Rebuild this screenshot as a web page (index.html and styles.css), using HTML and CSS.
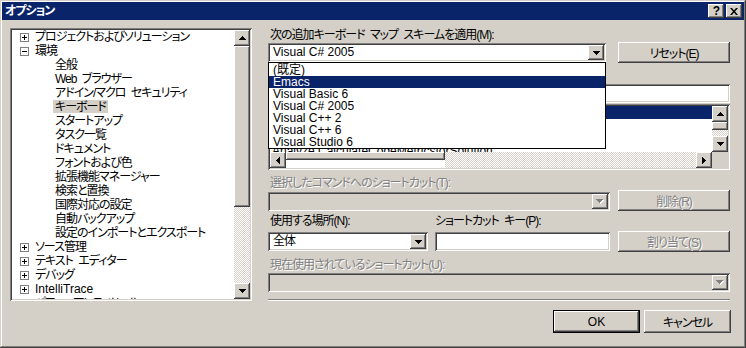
FILE: index.html
```html
<!DOCTYPE html>
<html lang="ja">
<head>
    <meta charset="UTF-8">
    <meta name="viewport" content="width=device-width, initial-scale=1.0">
    <title>オプション</title>
    <link rel="stylesheet" href="styles.css">
</head>
<body>
    <div class="window">
        <div class="titlebar">
            <span class="title">オプション</span>
            <div class="caption-buttons">
                <button class="raised cap-btn">?</button>
                <button class="raised cap-btn">
                    <svg width="8" height="7" viewBox="0 0 8 7"><path d="M0 0h2l2 2.4L6 0h2L5 3.5 8 7H6L4 4.6 2 7H0l3-3.5z"/></svg>
                </button>
            </div>
        </div>

        <div class="content">
            <!-- left: category tree -->
            <div class="tree sunken">
                <ul class="tree-items">
                    <li class="node"><svg class="toggle" width="9" height="9" viewBox="0 0 9 9"><rect x="0.5" y="0.5" width="8" height="8" fill="#fff" stroke="#808080"/><path d="M2 4.5h5M4.5 2v5" stroke="#000"/></svg>プロジェクトおよびソリューション</li>
                    <li class="node"><svg class="toggle" width="9" height="9" viewBox="0 0 9 9"><rect x="0.5" y="0.5" width="8" height="8" fill="#fff" stroke="#808080"/><path d="M2 4.5h5" stroke="#000"/></svg>環境</li>
                    <li class="child"><span>全般</span></li>
                    <li class="child"><span>Web ブラウザー</span></li>
                    <li class="child"><span>アドイン/マクロ セキュリティ</span></li>
                    <li class="child"><span class="current">キーボード</span></li>
                    <li class="child"><span>スタートアップ</span></li>
                    <li class="child"><span>タスク一覧</span></li>
                    <li class="child"><span>ドキュメント</span></li>
                    <li class="child"><span>フォントおよび色</span></li>
                    <li class="child"><span>拡張機能マネージャー</span></li>
                    <li class="child"><span>検索と置換</span></li>
                    <li class="child"><span>国際対応の設定</span></li>
                    <li class="child"><span>自動バックアップ</span></li>
                    <li class="child"><span>設定のインポートとエクスポート</span></li>
                    <li class="node"><svg class="toggle" width="9" height="9" viewBox="0 0 9 9"><rect x="0.5" y="0.5" width="8" height="8" fill="#fff" stroke="#808080"/><path d="M2 4.5h5M4.5 2v5" stroke="#000"/></svg>ソース管理</li>
                    <li class="node"><svg class="toggle" width="9" height="9" viewBox="0 0 9 9"><rect x="0.5" y="0.5" width="8" height="8" fill="#fff" stroke="#808080"/><path d="M2 4.5h5M4.5 2v5" stroke="#000"/></svg>テキスト エディター</li>
                    <li class="node"><svg class="toggle" width="9" height="9" viewBox="0 0 9 9"><rect x="0.5" y="0.5" width="8" height="8" fill="#fff" stroke="#808080"/><path d="M2 4.5h5M4.5 2v5" stroke="#000"/></svg>デバッグ</li>
                    <li class="node latin"><svg class="toggle" width="9" height="9" viewBox="0 0 9 9"><rect x="0.5" y="0.5" width="8" height="8" fill="#fff" stroke="#808080"/><path d="M2 4.5h5M4.5 2v5" stroke="#000"/></svg>IntelliTrace</li>
                    <li class="node"><svg class="toggle" width="9" height="9" viewBox="0 0 9 9"><rect x="0.5" y="0.5" width="8" height="8" fill="#fff" stroke="#808080"/><path d="M2 4.5h5M4.5 2v5" stroke="#000"/></svg>パフォーマンス ツール</li>
                </ul>
                <div class="vscroll">
                    <span class="raised sb-btn"><svg width="7" height="4" viewBox="0 0 7 4"><path d="M3 0h1v1h1v1h1v1h1v1H0V3h1V2h1V1h1z"/></svg></span>
                    <span class="raised sb-thumb"></span>
                    <span class="sb-track"></span>
                    <span class="raised sb-btn"><svg width="7" height="4" viewBox="0 0 7 4"><path d="M0 0h7v1H6v1H5v1H4v1H3V3H2V2H1V1H0z"/></svg></span>
                </div>
            </div>

            <!-- right: keyboard settings -->
            <div class="panel">
                <label class="lbl">次の追加キーボード マップ スキームを適用(M):</label>
                <div class="row row-scheme">
                    <div class="combo sunken scheme">
                        <span class="combo-text latin">Visual C# 2005</span>
                        <span class="raised combo-btn"><svg width="7" height="4" viewBox="0 0 7 4"><path d="M0 0h7v1H6v1H5v1H4v1H3V3H2V2H1V1H0z"/></svg></span>
                        <ul class="dropdown latin">
                            <li>(既定)</li>
                            <li class="selected">Emacs</li>
                            <li>Visual Basic 6</li>
                            <li>Visual C# 2005</li>
                            <li>Visual C++ 2</li>
                            <li>Visual C++ 6</li>
                            <li>Visual Studio 6</li>
                        </ul>
                    </div>
                    <button class="raised push">リセット(E)</button>
                </div>

                <label class="lbl lbl-search">次の文字列を含むコマンドを表示(C):</label>
                <div class="textbox sunken search"></div>

                <div class="cmd-list sunken">
                    <div class="cmd-body">
                        <ul class="cmd-rows latin">
                            <li class="selected">Action.Add.NewProject</li>
                            <li>Action.Add.NewTest</li>
                            <li>Action.Add.NewUnitTest</li>
                            <li>Analyze.CalculateCodeMetricsforSolution</li>
                        </ul>
                        <div class="vscroll">
                            <span class="raised sb-btn"><svg width="7" height="4" viewBox="0 0 7 4"><path d="M3 0h1v1h1v1h1v1h1v1H0V3h1V2h1V1h1z"/></svg></span>
                            <span class="raised sb-thumb"></span>
                            <span class="sb-track"></span>
                            <span class="raised sb-btn"><svg width="7" height="4" viewBox="0 0 7 4"><path d="M0 0h7v1H6v1H5v1H4v1H3V3H2V2H1V1H0z"/></svg></span>
                        </div>
                    </div>
                    <div class="hscroll">
                        <span class="raised sb-btn"><svg width="4" height="7" viewBox="0 0 4 7"><path d="M3 0h1v7H3V6H2V5H1V4H0V3h1V2h1V1h1z"/></svg></span>
                        <span class="raised sb-thumb"></span>
                        <span class="sb-track"></span>
                        <span class="raised sb-btn"><svg width="4" height="7" viewBox="0 0 4 7"><path d="M0 0h1v1h1v1h1v1h1v1H3v1H2v1H1v1H0z"/></svg></span>
                        <span class="corner"></span>
                    </div>
                </div>

                <label class="lbl disabled lbl-gap">選択したコマンドへのショートカット(T):</label>
                <div class="row row-del">
                    <div class="combo sunken off del-combo">
                        <span class="combo-text"></span>
                        <span class="raised combo-btn"><svg width="8" height="5" viewBox="0 0 8 5"><path fill="#fff" d="M1 1h7v1H7v1H6v1H5v1H4V4H3V3H2V2H1z"/><path fill="#808080" d="M0 0h7v1H6v1H5v1H4v1H3V3H2V2H1V1H0z"/></svg></span>
                    </div>
                    <button class="raised push disabled">削除(R)</button>
                </div>

                <div class="row-labels">
                    <label class="lbl lbl-where">使用する場所(N):</label>
                    <label class="lbl lbl-key">ショートカット キー(P):</label>
                </div>
                <div class="row row-assign">
                    <div class="combo sunken where-combo">
                        <span class="combo-text">全体</span>
                        <span class="raised combo-btn"><svg width="7" height="4" viewBox="0 0 7 4"><path d="M0 0h7v1H6v1H5v1H4v1H3V3H2V2H1V1H0z"/></svg></span>
                    </div>
                    <div class="textbox sunken key-box"></div>
                    <button class="raised push disabled">割り当て(S)</button>
                </div>

                <label class="lbl disabled lbl-gap">現在使用されているショートカット(U):</label>
                <div class="combo sunken off used-combo">
                    <span class="combo-text"></span>
                    <span class="raised combo-btn"><svg width="8" height="5" viewBox="0 0 8 5"><path fill="#fff" d="M1 1h7v1H7v1H6v1H5v1H4V4H3V3H2V2H1z"/><path fill="#808080" d="M0 0h7v1H6v1H5v1H4v1H3V3H2V2H1V1H0z"/></svg></span>
                </div>

                <div class="separator"></div>
            </div>
        </div>

        <div class="footer">
            <button class="raised push default latin">OK</button>
            <button class="raised push">キャンセル</button>
        </div>
    </div>
</body>
</html>
```

FILE: styles.css
```css
* {
    box-sizing: border-box;
}

body {
    margin: 0;
    background-color: #d4d0c8;
    font-family: "Liberation Sans", "Noto Sans CJK JP", sans-serif;
    font-size: 12px;
    font-feature-settings: "palt" 1;
    letter-spacing: -1px;
    word-spacing: 3px;
    color: #000;
}

/* latin-only text keeps normal spacing */
.latin {
    letter-spacing: 0;
    word-spacing: 0;
}

ul {
    list-style: none;
    margin: 0;
    padding: 0;
}

button {
    font: inherit;
    color: inherit;
    letter-spacing: inherit;
    word-spacing: inherit;
    border: none;
    margin: 0;
    padding: 0;
}

/* classic 3d borders */
.raised {
    background-color: #d4d0c8;
    box-shadow: inset -1px -1px #404040, inset 1px 1px #fff, inset -2px -2px #808080, inset 2px 2px #d4d0c8;
}

.sunken {
    padding: 2px;
    box-shadow: inset 1px 1px #808080, inset -1px -1px #fff, inset 2px 2px #404040, inset -2px -2px #d4d0c8;
}

.disabled {
    color: #808080;
    text-shadow: 1px 1px #fff;
}

.window {
    width: 746px;
    height: 348px;
    padding: 2px;
    display: flex;
    flex-direction: column;
    box-shadow: inset -1px -1px #404040, inset 1px 1px #d4d0c8, inset -2px -2px #808080, inset 2px 2px #fff;
}

.titlebar {
    height: 18px;
    flex: none;
    background-color: #0a246a;
    display: flex;
    align-items: center;
    justify-content: space-between;
    padding: 0 2px 0 3px;
}

.title {
    color: #fff;
    font-weight: bold;
    line-height: 14px;
}

.caption-buttons {
    display: flex;
    gap: 2px;
}

.cap-btn {
    width: 16px;
    height: 14px;
    display: flex;
    align-items: center;
    justify-content: center;
    font-weight: bold;
    line-height: 14px;
}

.content {
    display: flex;
    gap: 16px;
    padding: 8px 0 0 8px;
}

/* tree */
.tree {
    width: 242px;
    height: 273px;
    display: flex;
    background-color: #fff;
}

.tree-items {
    flex: 1;
    overflow: hidden;
}

.tree-items li {
    height: 14px;
    line-height: 14px;
    display: flex;
    align-items: flex-start;
    white-space: nowrap;
}

.tree-items .node {
    padding-left: 8px;
}

.toggle {
    flex: none;
    margin: 3px 6px 0 0;
}

.tree-items .child {
    padding-left: 41px;
}

.tree-items .child span {
    padding: 0 2px;
    height: 13px;
    line-height: 14px;
}

.tree-items .current {
    background-color: #d4d0c8;
}

.vscroll {
    width: 16px;
    flex: none;
    display: flex;
    flex-direction: column;
}

.sb-btn {
    width: 16px;
    height: 16px;
    flex: none;
    display: flex;
    align-items: center;
    justify-content: center;
}

.sb-track {
    flex: 1;
    background: repeating-conic-gradient(#fff 0 25%, #d4d0c8 0 50%) 0 0 / 2px 2px;
}

.tree .sb-thumb {
    height: 161px;
    flex: none;
}

/* right panel */
.panel {
    width: 462px;
    display: flex;
    flex-direction: column;
}

.lbl {
    height: 14px;
    line-height: 14px;
    padding-left: 2px;
    white-space: nowrap;
}

.lbl-gap {
    margin-top: 6px;
}

.row {
    height: 21px;
    display: flex;
    justify-content: space-between;
    align-items: flex-start;
}

.combo {
    position: relative;
    height: 19px;
    margin-top: 1px;
    display: flex;
    align-items: center;
    background-color: #fff;
}

.combo.off {
    background-color: #d4d0c8;
}

.combo-text {
    flex: 1;
    padding-left: 3px;
    line-height: 15px;
}

.combo-btn {
    width: 16px;
    height: 15px;
    flex: none;
    display: flex;
    align-items: center;
    justify-content: center;
}

.scheme {
    width: 338px;
}

.dropdown {
    position: absolute;
    top: 19px;
    left: 0;
    width: 338px;
    height: 87px;
    padding-top: 1px;
    border: 1px solid #000;
    background-color: #fff;
    z-index: 2;
}

.dropdown li {
    height: 12px;
    line-height: 12px;
    padding-left: 4px;
}

.selected {
    background-color: #0a246a;
    color: #fff;
}

.push {
    width: 112px;
    height: 21px;
    display: flex;
    align-items: center;
    justify-content: center;
}

.lbl-search {
    height: 21px;
    padding-top: 5px;
}

.textbox {
    height: 19px;
    background-color: #fff;
}

.cmd-list {
    height: 66px;
    margin-top: 1px;
    display: flex;
    flex-direction: column;
    background-color: #fff;
}

.cmd-body {
    flex: 1;
    min-height: 0;
    display: flex;
    overflow: hidden;
}

.cmd-rows {
    flex: 1;
    overflow: hidden;
}

.cmd-rows li {
    height: 13px;
    line-height: 13px;
    padding-left: 2px;
    white-space: nowrap;
}

.cmd-list .sb-thumb {
    height: 8px;
    flex: none;
}

.hscroll {
    height: 16px;
    flex: none;
    display: flex;
}

.hscroll .sb-thumb {
    width: 159px;
    flex: none;
}

.corner {
    width: 16px;
    background-color: #d4d0c8;
}

.row-del .combo {
    margin-top: 2px;
}

.del-combo {
    width: 342px;
}

.row-labels {
    height: 20px;
    padding-top: 3px;
    display: flex;
}

.lbl-where {
    width: 167px;
}

.lbl-key {
    padding-left: 0;
}

.where-combo {
    width: 160px;
}

.key-box {
    width: 175px;
    margin-top: 1px;
    margin-left: 7px;
    margin-right: auto;
}

.used-combo {
    width: 462px;
}

.separator {
    height: 2px;
    margin-top: 7px;
    border-top: 1px solid #808080;
    border-bottom: 1px solid #fff;
}

.footer {
    display: flex;
    justify-content: flex-end;
    gap: 4px;
    padding: 9px 13px 0 0;
}

.footer .push {
    width: 87px;
    height: 23px;
}

.push.default {
    border: 1px solid #000;
}
```
